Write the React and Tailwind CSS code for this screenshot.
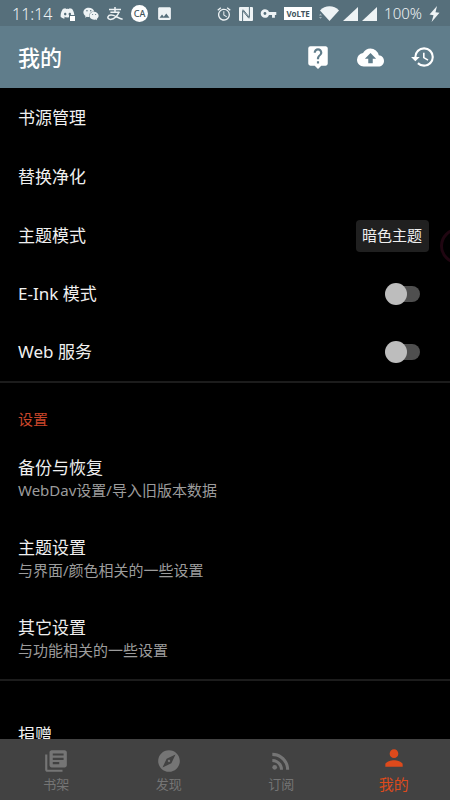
import React, { useState } from 'react';
import {
  MdAlarm,
  MdCloudUpload,
  MdExplore,
  MdHistory,
  MdImage,
  MdLibraryBooks,
  MdLiveHelp,
  MdPerson,
  MdRssFeed,
  MdVpnKey,
} from 'react-icons/md';
import { FaDiscord, FaWeixin } from 'react-icons/fa';

const AlipayIcon = () => (
  <svg viewBox="0 0 16 14" className="w-4 h-3.5" fill="none" stroke="currentColor" strokeWidth="1.5">
    <path d="M8 0v5M2 2.4h12M3.4 5.2h9.2" />
    <path d="M12 5C10.8 8.6 7.4 12.4 3.6 12.4 1.4 12.4.6 11 1 9.8 1.8 8 4.4 7.8 6.4 8.4 9.4 9.4 12 11.4 15.6 12.2" />
  </svg>
);

const NfcIcon = () => (
  <svg viewBox="0 0 14 14" className="w-3.5 h-3.5">
    <rect width="14" height="14" rx="1" fill="currentColor" />
    <path d="M3.6 14V3.6L10 11.4M10.4 0v10.4L4 2.6" fill="none" stroke="#566f7b" />
  </svg>
);

const WifiIcon = () => (
  <svg viewBox="0 0 20 15" className="w-5 h-[15px]" fill="currentColor">
    <path d="M1 4.4C6 -1 15 -1 20 4.4L10.5 15z" />
    <path d="M0 9.4 1.5 7.6 3 9.4zM0 11l1.5 1.8L3 11z" opacity=".5" />
  </svg>
);

const SignalIcon = () => (
  <svg viewBox="0 0 15 14" className="w-[15px] h-3.5" fill="currentColor">
    <path d="M15 0v14H0z" />
  </svg>
);

const BoltIcon = () => (
  <svg viewBox="0 0 11 16" className="w-[11px] h-4" fill="currentColor">
    <path d="M8 0 .5 8.6l4 .6L2.6 16 10.5 6.8l-4-.6z" />
  </svg>
);

const StatusBar = () => (
  <div className="flex items-center justify-between h-[26px] pt-px pl-3 pr-2.5 bg-[#566f7b] text-[#eef3f5]">
    <div className="flex items-center gap-2">
      <span className="w-10 text-base font-light">11:14</span>
      <span className="relative">
        <FaDiscord size={15} />
        <span className="absolute right-0 bottom-0 w-1.5 h-1.5 bg-white border-l border-t border-[#566f7b]" />
      </span>
      <FaWeixin size={16} />
      <AlipayIcon />
      <span className="flex items-center justify-center w-[17px] h-[17px] rounded-full bg-white text-[#42545d] text-[9px] font-medium">
        CA
      </span>
      <MdImage size={17} />
    </div>
    <div className="flex items-center gap-[7px]">
      <MdAlarm size={16} />
      <NfcIcon />
      <MdVpnKey size={17} />
      <span className="flex items-center justify-center w-7 h-[13px] bg-white text-[#42545d] text-[8px] font-bold">
        VoLTE
      </span>
      <div className="flex items-center gap-1">
        <WifiIcon />
        <SignalIcon />
        <SignalIcon />
      </div>
      <span className="text-[15px] font-light">100%</span>
      <BoltIcon />
    </div>
  </div>
);

const Toolbar = () => (
  <div className="flex items-center justify-between h-[62px] pl-[18px] pr-3.5 bg-[#607d8b] text-white">
    <h1 className="text-[22px] font-medium">我的</h1>
    <div className="flex items-center gap-[26px]">
      <button aria-label="帮助">
        <MdLiveHelp size={26} />
      </button>
      <button aria-label="备份">
        <MdCloudUpload size={27} />
      </button>
      <button aria-label="历史">
        <MdHistory size={26} />
      </button>
    </div>
  </div>
);

const LinkRow = ({ title }) => (
  <a href="#" className="flex items-center h-[59px] px-[18px] text-[17px]">
    {title}
  </a>
);

const SwitchRow = ({ id, title }) => {
  const [on, setOn] = useState(false);
  return (
    <div className="flex items-center justify-between h-[58px] pl-[18px] pr-[30px]">
      <label htmlFor={id} className="text-[17px]">
        {title}
      </label>
      <input
        id={id}
        type="checkbox"
        checked={on}
        onChange={() => setOn(!on)}
        className="flex items-center justify-end appearance-none relative w-[35px] h-[22px] before:w-8 before:h-4 before:rounded-full before:bg-[#4f4f4f] after:absolute after:left-0 after:top-0 after:w-[22px] after:h-[22px] after:rounded-full after:bg-[#bdbdbd] checked:after:left-[13px]"
      />
    </div>
  );
};

const DetailRow = ({ title, summary }) => (
  <a href="#" className="flex flex-col justify-center h-20 px-[18px] leading-[22px]">
    <span className="text-[17px]">{title}</span>
    <span className="text-[15px] text-[#9c9c9c]">{summary}</span>
  </a>
);

const tabs = [
  { label: '书架', icon: MdLibraryBooks },
  { label: '发现', icon: MdExplore },
  { label: '订阅', icon: MdRssFeed },
  { label: '我的', icon: MdPerson, active: true },
];

const BottomNav = () => (
  <nav className="grid grid-cols-4 h-[61px] shrink-0 bg-[#424242]">
    {tabs.map(({ label, icon: Icon, active }) => (
      <button
        key={label}
        className={
          active
            ? 'flex flex-col items-center pt-1.5 text-[15px] leading-[26px] text-[#dd4a1c]'
            : 'flex flex-col items-center pt-[9px] text-[13px] leading-5 text-[#757575]'
        }
      >
        <Icon size={26} />
        {label}
      </button>
    ))}
  </nav>
);

const App = () => {
  const [theme, setTheme] = useState('dark');

  return (
    <div className="relative flex flex-col h-screen overflow-hidden bg-black text-[#f0f0f0] font-['Noto_Sans','Noto_Sans_CJK_SC',sans-serif]">
      <header className="shrink-0">
        <StatusBar />
        <Toolbar />
      </header>

      <main className="flex-1 min-h-0 overflow-y-auto [scrollbar-width:none]">
        <LinkRow title="书源管理" />
        <LinkRow title="替换净化" />
        <div className="flex items-center justify-between h-[59px] pl-[18px] pr-[21px]">
          <label htmlFor="theme" className="text-[17px]">
            主题模式
          </label>
          <select
            id="theme"
            value={theme}
            onChange={(e) => setTheme(e.target.value)}
            className="appearance-none h-8 px-1.5 rounded bg-[#202020] text-[15px]"
          >
            <option value="dark">暗色主题</option>
          </select>
        </div>
        <SwitchRow id="eink" title="E-Ink 模式" />
        <SwitchRow id="web" title="Web 服务" />

        <section className="border-y-2 border-[#1c1c1c]">
          <h2 className="pt-6 pb-2 px-[18px] text-[15px] leading-6 text-[#c8452a]">设置</h2>
          <DetailRow title="备份与恢复" summary="WebDav设置/导入旧版本数据" />
          <DetailRow title="主题设置" summary="与界面/颜色相关的一些设置" />
          <DetailRow title="其它设置" summary="与功能相关的一些设置" />
        </section>

        <div className="pt-6">
          <LinkRow title="捐赠" />
        </div>
      </main>

      <BottomNav />

      {/* Floating ball, mostly past the right edge */}
      <div className="absolute -right-[26px] top-[228px] w-9 h-9 rounded-full border-3 border-[#200611]" />
    </div>
  );
};

export default App;
